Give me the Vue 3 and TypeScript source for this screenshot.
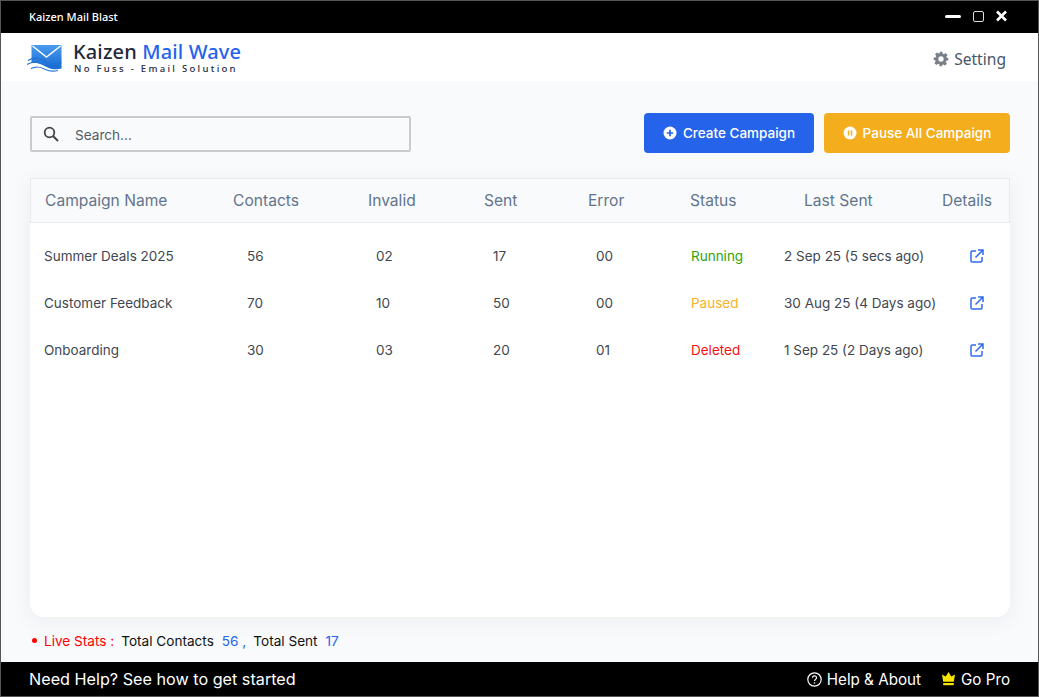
<script setup lang="ts">
interface Row {
  name: string
  contacts: string
  invalid: string
  sent: string
  error: string
  status: string
  statusClass: string
  last: string
}
const rows: Row[] = [
  { name: 'Summer Deals 2025', contacts: '56', invalid: '02', sent: '17', error: '00', status: 'Running', statusClass: 'running', last: '2 Sep 25 (5 secs ago)' },
  { name: 'Customer Feedback', contacts: '70', invalid: '10', sent: '50', error: '00', status: 'Paused', statusClass: 'paused', last: '30 Aug 25 (4 Days ago)' },
  { name: 'Onboarding', contacts: '30', invalid: '03', sent: '20', error: '01', status: 'Deleted', statusClass: 'deleted', last: '1 Sep 25 (2 Days ago)' },
]
const headers = ['Campaign Name', 'Contacts', 'Invalid', 'Sent', 'Error', 'Status', 'Last Sent', 'Details']
</script>

<template>
  <div class="window">
    <div class="titlebar">
      <span class="app-title">Kaizen Mail Blast</span>
      <div class="win-controls">
        <span class="win-min"></span>
        <span class="win-max"></span>
        <svg class="win-close" width="12" height="12" viewBox="0 0 12 12"><path d="M2 1.500 11 10.500M11 1.500 2 10.500" stroke="#fff" stroke-width="2.600" fill="none"/></svg>
      </div>
    </div>

    <header class="brandbar">
      <div class="brand">
        <svg class="logo" width="36" height="28" viewBox="0 0 36 28">
          <defs>
            <linearGradient id="env" x1="0" y1="0" x2="0" y2="1">
              <stop offset="0" stop-color="#4a9cf0"/>
              <stop offset="1" stop-color="#1668cf"/>
            </linearGradient>
          </defs>
          <path d="M4.500 1H33.500a1 1 0 0 1 1 1V24.500C30 26 24 25.500 19 22.500 13 19 8 18 4.500 19Z" fill="url(#env)"/>
          <path d="M5.500 2 19.500 13 33.500 2" fill="none" stroke="#fff" stroke-width="1.400"/>
          <path d="M1 16.500C8 12.500 13 14 19 18c5 3 10 3 15.500 .5" fill="none" stroke="#1f74d6" stroke-width="1.200"/>
          <path d="M0 20.500C7 16.500 13 18 19 22c5 3 10 3 15.500 1" fill="none" stroke="#1f74d6" stroke-width="1.200"/>
          <path d="M4 24.500C10 21.500 14 23 18.500 25.500c4 2 8 2 12.500 1" fill="none" stroke="#1f74d6" stroke-width="1.200"/>
        </svg>
        <div class="brand-text">
          <div class="brand-name">Kaizen <span class="blue">Mail Wave</span></div>
          <div class="brand-tag">No Fuss - Email Solution</div>
        </div>
      </div>
      <div class="setting">
        <svg width="16" height="16" viewBox="0 0 24 24"><path fill="#7a7f87" fill-rule="evenodd" d="M10 1h4l.6 3.100 1.900.8 2.600-1.800 2.800 2.800-1.800 2.600.8 1.900L23 10v4l-3.100.6-.8 1.900 1.800 2.600-2.800 2.800-2.600-1.800-1.900.8L14 23h-4l-.6-3.100-1.900-.8-2.600 1.800-2.800-2.800 1.800-2.600-.8-1.900L1 14v-4l3.100-.6.8-1.900-1.800-2.600 2.800-2.800 2.600 1.800 1.900-.8ZM12 8a4 4 0 1 0 0 8 4 4 0 0 0 0-8Z"/></svg>
        <span>Setting</span>
      </div>
    </header>

    <main class="content">
      <div class="toolbar">
        <label class="search">
          <svg width="18" height="18" viewBox="0 0 18 18"><circle cx="7.500" cy="7.500" r="4.800" fill="none" stroke="#444" stroke-width="1.800"/><path d="M11 11l5 5" stroke="#444" stroke-width="2"/></svg>
          <span class="search-text">Search...</span>
        </label>
        <div class="actions">
          <button class="btn create">
            <svg width="14" height="14" viewBox="0 0 14 14"><circle cx="7" cy="7" r="6.500" fill="#fff"/><path d="M7 3.800v6.400M3.800 7h6.400" stroke="#2563eb" stroke-width="1.700"/></svg>
            Create Campaign
          </button>
          <button class="btn pause">
            <svg width="14" height="14" viewBox="0 0 14 14"><circle cx="7" cy="7" r="6.500" fill="#fff"/><path d="M5.500 4.500v5M8.500 4.500v5" stroke="#f4ad1c" stroke-width="1.500"/></svg>
            Pause All Campaign
          </button>
        </div>
      </div>

      <section class="card">
        <div class="thead">
          <span v-for="h in headers" :key="h">{{ h }}</span>
        </div>
        <div class="tbody">
          <div v-for="r in rows" :key="r.name" class="trow">
            <span>{{ r.name }}</span>
            <span>{{ r.contacts }}</span>
            <span>{{ r.invalid }}</span>
            <span>{{ r.sent }}</span>
            <span>{{ r.error }}</span>
            <span :class="r.statusClass">{{ r.status }}</span>
            <span>{{ r.last }}</span>
            <svg class="open" width="14" height="14" viewBox="0 0 14 14" fill="none" stroke="#2f6bed" stroke-width="1.500">
              <path d="M6 2H2.200C1.500 2 1 2.500 1 3.200v8.600C1 12.500 1.500 13 2.200 13h8.600c.7 0 1.200-.5 1.200-1.200V8"/>
              <path d="M5.500 8.500 12.500 1.500M8 1h5v5"/>
            </svg>
          </div>
        </div>
      </section>

      <div class="stats">
        <span class="dot"></span>
        <span class="live">Live Stats :</span>
        <span class="stat-label first">Total Contacts</span>
        <span class="blue num">56 ,</span>
        <span class="stat-label second">Total Sent</span>
        <span class="blue num">17</span>
      </div>
    </main>

    <footer class="footer">
      <span class="help-text">Need Help? See how to get started</span>
      <div class="footer-links">
        <span class="flink">
          <svg width="15" height="15" viewBox="0 0 15 15" fill="none" stroke="#fff"><circle cx="7.500" cy="7.500" r="6.700" stroke-width="1.200"/><path d="M5.500 5.800a2 2 0 1 1 3 1.700c-.7.4-1 .8-1 1.500" stroke-width="1.200"/><circle cx="7.500" cy="11" r=".8" fill="#fff" stroke="none"/></svg>
          Help &amp; About
        </span>
        <span class="flink">
          <svg width="15" height="14" viewBox="0 0 15 14"><path fill="#f7e400" d="M7.500 0 10.300 4.500 14 2.500l-1.200 7.300H2.200L1 2.500l3.700 2Z"/><rect x="2.200" y="11" width="10.600" height="2.200" fill="#f7e400"/></svg>
          Go Pro
        </span>
      </div>
    </footer>
  </div>
</template>

<style>
html, body { margin: 0; padding: 0; background: #f8fafc; }
</style>

<style scoped>
.window {
  box-sizing: border-box;
  width: 1039px;
  height: 697px;
  border: 1px solid #555;
  display: flex;
  flex-direction: column;
  font-family: Inter, "Liberation Sans", sans-serif;
  background: #f8fafc;
  overflow: hidden;
}
.titlebar {
  height: 32px;
  flex: none;
  background: #000;
  color: #fff;
  display: flex;
  align-items: center;
  justify-content: space-between;
  padding: 0 31px 2px 28px;
  box-sizing: border-box;
}
.app-title { font: 500 11px "Noto Sans", sans-serif; }
.win-controls { display: flex; align-items: center; }
.win-min { width: 16px; height: 3px; border-radius: 2px; background: #fff; }
.win-max {
  box-sizing: border-box;
  width: 11px; height: 11px;
  margin-left: 12px;
  border: 1.300px solid #ddd;
  border-radius: 2px;
}
.win-close { margin-left: 11px; }
.brandbar {
  height: 48px;
  flex: none;
  background: #fff;
  display: flex;
  align-items: center;
  justify-content: space-between;
  padding: 0 32px 0 26px;
}
.brand { display: flex; align-items: center; gap: 10px; }
.logo { margin-top: 2px; }
.brand-text { display: flex; flex-direction: column; }
.brand-name {
  font: 500 20px/22px "Noto Sans", sans-serif;
  color: #1e293b;
  letter-spacing: .14px;
}
.blue { color: #2563eb; }
.brand-tag {
  font: 500 9.500px/11px "Noto Sans", sans-serif;
  color: #1e293b;
  letter-spacing: 2.300px;
  margin-left: 1px;
}
.setting {
  display: flex;
  align-items: center;
  gap: 5px;
  padding-top: 4px;
  font: 400 15.600px "Noto Sans", sans-serif;
  color: #475569;
}
.content {
  flex: 1;
  min-height: 0;
  display: flex;
  flex-direction: column;
  padding: 32px 28px 0 29px;
}
.toolbar {
  display: flex;
  align-items: flex-start;
  justify-content: space-between;
}
.search {
  box-sizing: border-box;
  width: 381px;
  height: 36px;
  margin-top: 3px;
  border: 2px solid #c9cccf;
  border-radius: 2px;
  display: flex;
  align-items: center;
  gap: 15px;
  padding-left: 10px;
  font-size: 13.600px;
  color: #555b63;
}
.search-text { padding-top: 2px; }
.actions { display: flex; gap: 10px; }
.btn {
  height: 40px;
  border: 0;
  border-radius: 4px;
  color: #fff;
  font: 500 13.500px Inter, sans-serif;
  display: flex;
  align-items: center;
  justify-content: center;
  gap: 6px;
  padding: 0;
}
.create { width: 170px; background: #2563eb; }
.pause { width: 186px; background: #f4ad1c; }
.card {
  flex: 1;
  min-height: 0;
  margin-top: 25px;
  background: #fff;
  border-radius: 0 0 14px 14px;
  box-shadow: 0 4px 22px rgba(30, 41, 59, .06);
}
.thead {
  box-sizing: border-box;
  height: 45px;
  background: #f8fafc;
  border: 1px solid #e8eaed;
  display: grid;
  grid-template-columns: 188px 135px 116px 104px 102px 114px 138px auto;
  align-items: center;
  padding: 0 0 0 14px;
  font-size: 15.600px;
  color: #64748b;
}
.tbody { padding-top: 9px; }
.trow {
  height: 47px;
  display: grid;
  grid-template-columns: 203px 129px 117px 103px 95px 93px 186px auto;
  align-items: center;
  padding-left: 14px;
  font-size: 13.500px;
  color: #414751;
}
.open { display: block; }
.running { color: #2fa50b; }
.paused { color: #f7b12a; }
.deleted { color: #f90f0f; }
.stats {
  height: 45px;
  flex: none;
  display: flex;
  align-items: center;
  padding-top: 2px;
  box-sizing: border-box;
  font-size: 13.600px;
  color: #111;
}
.dot { width: 5px; height: 5px; border-radius: 50%; background: #f00; margin: 0 7px 0 2px; }
.live { color: #f00; }
.stat-label.first { margin-left: 7px; }
.stat-label.second { margin-left: 7px; }
.num { margin-left: 8px; }
.footer {
  height: 34px;
  flex: none;
  background: #000;
  color: #fff;
  display: flex;
  align-items: center;
  justify-content: space-between;
  padding: 0 28px 0 28px;
  font-size: 16.200px;
}
.footer-links { display: flex; gap: 20px; font-size: 15.200px; }
.flink { display: flex; align-items: center; gap: 5px; }
</style>
